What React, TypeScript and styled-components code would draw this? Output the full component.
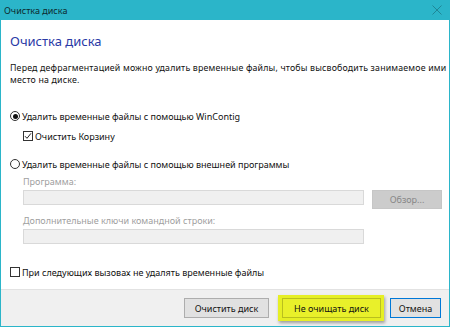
import React from "react";
import styled, { createGlobalStyle } from "styled-components";

const Global = createGlobalStyle`
  html, body { margin: 0; padding: 0; background: #fff; width: 450px; height: 328px; overflow: hidden; }
  * { box-sizing: border-box; }
  body { font-family: "Noto Sans", "Open Sans", sans-serif; font-size: 9px; color: #111; }
`;

const Window = styled.div`
  width: 450px;
  height: 327px;
  display: flex;
  flex-direction: column;
  border: 1px solid #2bb5c9;
  border-top: none;
  background: #fff;
`;

const TitleBar = styled.div`
  height: 20px;
  margin: 0 -1px;
  background: #2bb5c9;
  display: flex;
  align-items: center;
  justify-content: space-between;
  padding: 0 8px 0 4px;
  color: #0d2a2e;
  font-size: 9px;
`;

const Content = styled.div`
  flex: 1;
  display: flex;
  flex-direction: column;
  padding: 13px 4px 0 9px;
`;

const Heading = styled.div`
  font-size: 13px;
  line-height: 16px;
  color: #2a3aa6;
`;

const Description = styled.div`
  margin-top: 13px;
  line-height: 12px;
  font-size: 8.8px;
  letter-spacing: 0.17px;
  white-space: nowrap;
`;

const OptionRow = styled.label<{ $mt: number; $indent?: number }>`
  display: flex;
  align-items: center;
  gap: 2px;
  height: 14px;
  margin-top: ${(p) => p.$mt}px;
  margin-left: ${(p) => p.$indent ?? 0}px;
  font-size: 9px;
  white-space: nowrap;
`;

const RadioCircle = styled.span<{ $on?: boolean }>`
  width: 10px;
  height: 10px;
  border-radius: 50%;
  border: 1px solid #333;
  display: inline-flex;
  align-items: center;
  justify-content: center;
  flex: none;
  &::after {
    content: "";
    width: 5px;
    height: 5px;
    border-radius: 50%;
    background: ${(p) => (p.$on ? "#111" : "transparent")};
  }
`;

const CheckBox = styled.span`
  width: 10px;
  height: 10px;
  border: 1px solid #333;
  display: inline-flex;
  align-items: center;
  justify-content: center;
  flex: none;
  background: #fff;
`;

const SubLabel = styled.div<{ $mt: number }>`
  margin-top: ${(p) => p.$mt}px;
  margin-left: 13px;
  line-height: 12px;
  color: #a0a0a0;
  font-size: 9px;
`;

const FieldRow = styled.div<{ $mt: number }>`
  display: flex;
  align-items: flex-start;
  gap: 8px;
  margin-top: ${(p) => p.$mt}px;
  margin-left: 13px;
`;

const Field = styled.div`
  width: 341px;
  height: 15px;
  background: #f0f0f0;
  border: 1px solid #d9d9d9;
`;

const BrowseButton = styled.div`
  width: 70px;
  height: 19px;
  background: #cccccc;
  border: 1px solid #c6c6c6;
  color: #878787;
  display: flex;
  align-items: center;
  justify-content: center;
  font-size: 9px;
`;

const Footer = styled.div`
  height: 37px;
  background: #f0f0f0;
  border-top: 1px solid #e2e2e2;
  display: flex;
  justify-content: flex-end;
  align-items: flex-start;
  padding: 8px 8px 0 0;
`;

const Button = styled.div<{ $primary?: boolean; $w: number }>`
  width: ${(p) => p.$w}px;
  height: 20px;
  background: #e1e1e1;
  border: 1px solid ${(p) => (p.$primary ? "#0078d7" : "#adadad")};
  display: flex;
  align-items: center;
  justify-content: center;
  font-size: 9px;
  color: #111;
`;

const Highlight = styled.div`
  margin: -3px 6px 0 9px;
  padding: 3px 3px 3px 4px;
  background: #e6ef25;
  box-shadow: 1px 2px 3px rgba(0, 0, 0, 0.35);
`;

const YellowButton = styled.div`
  width: 99px;
  height: 20px;
  background: #e9f02a;
  border: 1px solid #b9bf1e;
  display: flex;
  align-items: center;
  justify-content: center;
  font-size: 9px;
  color: #111;
`;

export default function App() {
  return (
    <>
      <Global />
      <Window>
        <TitleBar>
          <span>Очистка диска</span>
          <svg width="10" height="10" viewBox="0 0 10 10">
            <path d="M0.5 0.5 L9.5 9.5 M9.5 0.5 L0.5 9.5" stroke="#1f8797" strokeWidth="1" />
          </svg>
        </TitleBar>
        <Content>
          <Heading>Очистка диска</Heading>
          <Description>
            Перед дефрагментацией можно удалить временные файлы, чтобы высвободить занимаемое ими
            <br />
            место на диске.
          </Description>
          <OptionRow $mt={23}>
            <RadioCircle $on />
            Удалить временные файлы с помощью WinContig
          </OptionRow>
          <OptionRow $mt={6} $indent={13}>
            <CheckBox>
              <svg width="8" height="8" viewBox="0 0 8 8">
                <path d="M1 4.2 L3 6.3 L7 1.3" fill="none" stroke="#222" strokeWidth="1" />
              </svg>
            </CheckBox>
            Очистить Корзину
          </OptionRow>
          <OptionRow $mt={14}>
            <RadioCircle />
            Удалить временные файлы с помощью внешней программы
          </OptionRow>
          <SubLabel $mt={5}>Программа:</SubLabel>
          <FieldRow $mt={2}>
            <Field />
            <BrowseButton>Обзор...</BrowseButton>
          </FieldRow>
          <SubLabel $mt={6}>Дополнительные ключи командной строки:</SubLabel>
          <FieldRow $mt={2}>
            <Field />
          </FieldRow>
          <OptionRow $mt={21}>
            <CheckBox />
            При следующих вызовах не удалять временные файлы
          </OptionRow>
        </Content>
        <Footer>
          <Button $w={85}>Очистить диск</Button>
          <Highlight>
            <YellowButton>Не очищать диск</YellowButton>
          </Highlight>
          <Button $w={51} $primary>
            Отмена
          </Button>
        </Footer>
      </Window>
    </>
  );
}
